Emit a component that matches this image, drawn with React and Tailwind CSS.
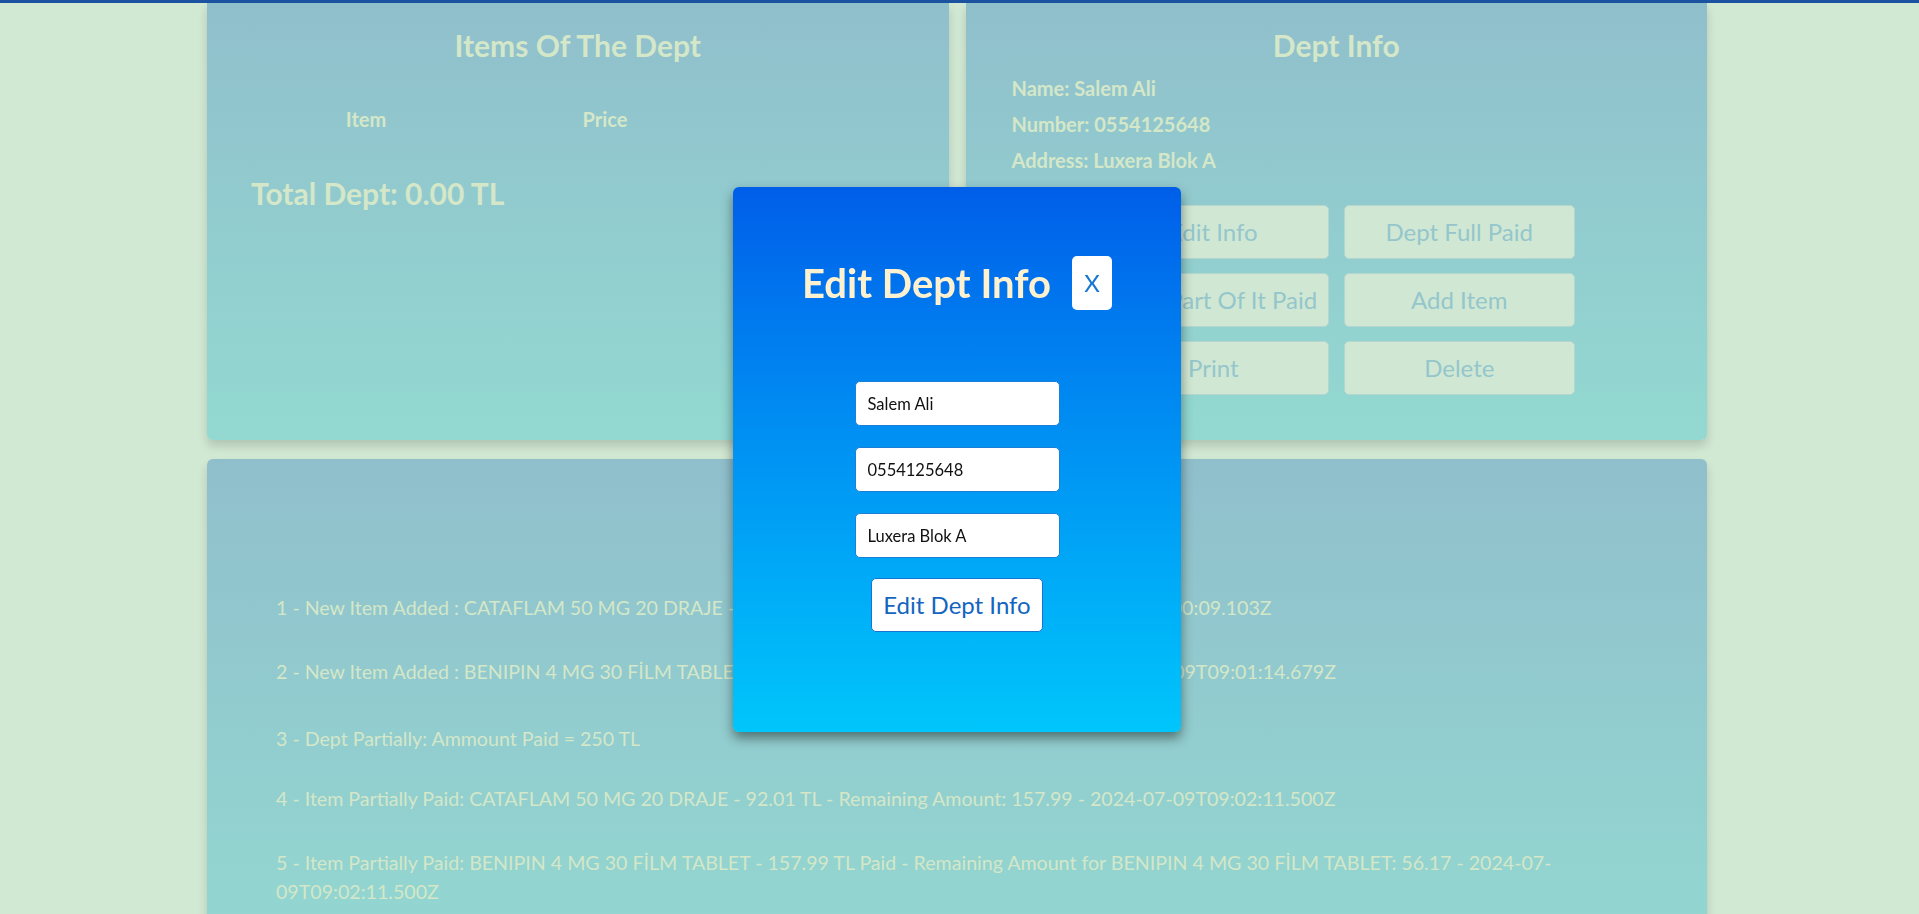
import { useState } from 'react';

const logs = [
  { t: '1 - New Item Added : CATAFLAM 50 MG 20 DRAJE - Price: 92.01 TL - Quantity: 1 pc - 2024-07-09T09:00:09.103Z', mt: 'mt-[74px]' },
  { t: '2 - New Item Added : BENIPIN 4 MG 30 FİLM TABLET - Price: 107.08 TL - Quantity: 2 Boxes - 2024-07-09T09:01:14.679Z', mt: 'mt-[35px]' },
  { t: '3 - Dept Partially: Ammount Paid = 250 TL', mt: 'mt-[38px]' },
  { t: '4 - Item Partially Paid: CATAFLAM 50 MG 20 DRAJE - 92.01 TL - Remaining Amount: 157.99 - 2024-07-09T09:02:11.500Z', mt: 'mt-[31px]' },
  { t: '5 - Item Partially Paid: BENIPIN 4 MG 30 FİLM TABLET - 157.99 TL Paid - Remaining Amount for BENIPIN 4 MG 30 FİLM TABLET: 56.17 - 2024-07-09T09:02:11.500Z', mt: 'mt-[35px]' },
];

const actions = ['Edit Info', 'Dept Full Paid', 'Dept Part Of It Paid', 'Add Item', 'Print', 'Delete'];

function Panel({ className = '', children }) {
  return (
    <div className={`bg-gradient-to-b from-[#90bfcc] to-[#93d9d1] shadow-[0_6px_10px_rgba(0,0,0,0.15)] text-[#d4e7c8] ${className}`}>
      {children}
    </div>
  );
}

function EditModal({ onClose }) {
  const [name, setName] = useState('Salem Ali');
  const [number, setNumber] = useState('0554125648');
  const [address, setAddress] = useState('Luxera Blok A');

  const inputCls =
    'w-[205px] h-[45px] bg-white border border-[#1a7fd6] rounded-[5px] pl-[12px] text-[16.5px] text-[#111] outline-none';

  return (
    <div className="fixed left-[733px] top-[187px] w-[448px] h-[545px] rounded-[6px] bg-gradient-to-b from-[#005ee9] to-[#00c6fb] shadow-[0_6px_12px_rgba(0,0,0,0.45)] flex flex-col items-center">
      <div className="flex items-center justify-center gap-[21px] mt-[69px]">
        <h2 className="text-[40px] leading-[48px] font-bold text-[#fef1cf]">Edit Dept Info</h2>
        <button
          onClick={onClose}
          className="w-[40px] h-[54px] bg-white rounded-[5px] text-[24px] text-[#1877d2]"
        >
          X
        </button>
      </div>
      <div className="flex flex-col items-center gap-[21px] mt-[71px]">
        <input className={inputCls} value={name} onChange={(e) => setName(e.target.value)} />
        <input className={inputCls} value={number} onChange={(e) => setNumber(e.target.value)} />
        <input className={inputCls} value={address} onChange={(e) => setAddress(e.target.value)} />
        <button className="mt-[-1px] w-[172px] h-[54px] bg-white border border-[#1574cf] rounded-[5px] text-[24px] text-[#1465c0]">
          Edit Dept Info
        </button>
      </div>
    </div>
  );
}

export default function App() {
  const [showEdit, setShowEdit] = useState(true);

  return (
    <div className="min-h-screen bg-[#d1e8d3] font-['Lato',sans-serif]">
      <div className="h-[3px] bg-[#1b53a1]" />
      <div className="w-[1500px] ml-[207px]">
        <div className="grid grid-cols-2 gap-[17px]">
          <Panel className="rounded-b-[6px] pt-[24px] px-[44px]">
            <h2 className="text-[30px] leading-[36px] font-bold text-center">Items Of The Dept</h2>
            <div className="grid grid-cols-[230px_248px_1fr] mt-[44px] text-[20px] leading-[24px] font-bold">
              <div className="text-center">Item</div>
              <div className="text-center">Price</div>
              <div />
            </div>
            <div className="mt-[44px] text-[30px] leading-[36px] font-bold">Total Dept: 0.00 TL</div>
          </Panel>

          <Panel className="rounded-b-[6px] pt-[24px] px-[46px] pb-[45px]">
            <h2 className="text-[30px] leading-[36px] font-bold text-center">Dept Info</h2>
            <div className="mt-[7px] text-[20px] leading-[36px] font-bold">
              <div>Name: Salem Ali</div>
              <div>Number: 0554125648</div>
              <div>Address: Luxera Blok A</div>
            </div>
            <div className="grid grid-cols-[231px_231px] justify-center gap-x-[15px] gap-y-[14px] mt-[27px]">
              {actions.map((a) => (
                <button
                  key={a}
                  onClick={() => a === 'Edit Info' && setShowEdit(true)}
                  className="h-[54px] px-[6px] whitespace-nowrap bg-[#d0e8d3] border border-[#b5d6cf] rounded-[5px] text-[24px] text-[#94c6cc]"
                >
                  {a}
                </button>
              ))}
            </div>
          </Panel>
        </div>

        <Panel className="mt-[19px] rounded-[6px] pt-[24px] px-[69px] pb-[70px]">
          <h2 className="text-[30px] leading-[36px] font-bold text-center">Dept History</h2>
          <div className="flex flex-col text-[19.6px] leading-[29px]">
            {logs.map((l) => (
              <p key={l.t} className={l.mt}>{l.t}</p>
            ))}
          </div>
        </Panel>
      </div>

      {showEdit && <EditModal onClose={() => setShowEdit(false)} />}
    </div>
  );
}
